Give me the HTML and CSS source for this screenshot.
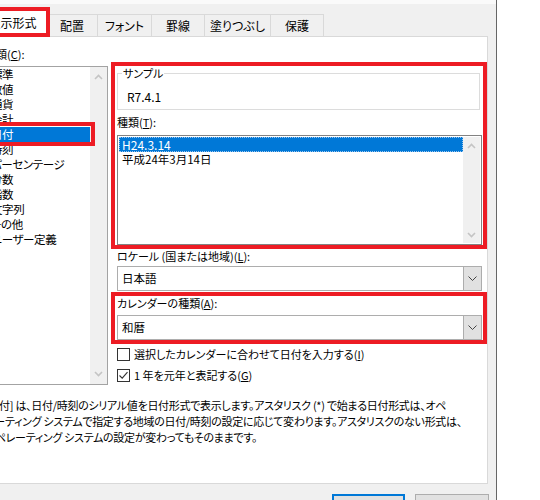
FILE: index.html
```html
<!DOCTYPE html>
<html lang="ja">
<head>
<meta charset="utf-8">
<title>セルの書式設定</title>
<link rel="stylesheet" href="styles.css">
</head>
<body>
<div class="screen">
  <div class="dialog">
    <div class="topband"></div>
    <div class="inner">
      <div class="tabs">
        <div class="tab active w-hyoji">表示形式<span class="mark mark-tab"></span></div>
        <div class="tab w-haichi">配置</div>
        <div class="tab w-font">フォント</div>
        <div class="tab w-keisen">罫線</div>
        <div class="tab w-nuri">塗りつぶし</div>
        <div class="tab w-hogo">保護</div>
      </div>
      <div class="panel">
        <div class="columns">
          <div class="leftcol">
            <div class="label lbl-cat">分類(<u>C</u>):</div>
            <div class="listbox cat">
              <div class="items">
                <div class="item">標準</div>
                <div class="item">数値</div>
                <div class="item">通貨</div>
                <div class="item">会計</div>
                <div class="item selected">日付<span class="mark mark-item"></span></div>
                <div class="item">時刻</div>
                <div class="item">パーセンテージ</div>
                <div class="item">分数</div>
                <div class="item">指数</div>
                <div class="item">文字列</div>
                <div class="item">その他</div>
                <div class="item">ユーザー定義</div>
              </div>
              <div class="vscroll cat-scroll">
                <svg class="chev" width="9" height="6" viewBox="0 0 9 6"><path d="M1 5 L4.5 1.5 L8 5" fill="none" stroke="#c4c4c4" stroke-width="1.6"/></svg>
                <svg class="chev" width="9" height="6" viewBox="0 0 9 6"><path d="M1 1 L4.5 4.5 L8 1" fill="none" stroke="#c4c4c4" stroke-width="1.6"/></svg>
              </div>
            </div>
          </div>
          <div class="rightcol">
            <div class="redbox box1">
              <div class="group">
                <span class="legend">サンプル</span>
                <div class="sample">R7.4.1</div>
              </div>
              <div class="label lbl-type">種類(<u>T</u>):</div>
              <div class="listbox types">
                <div class="items">
                  <div class="item titem selected focus">H24.3.14</div>
                  <div class="item titem">平成24年3月14日</div>
                </div>
                <div class="vscroll type-scroll">
                  <svg class="chev" width="9" height="6" viewBox="0 0 9 6"><path d="M1 5 L4.5 1.5 L8 5" fill="none" stroke="#c4c4c4" stroke-width="1.6"/></svg>
                  <svg class="chev" width="9" height="6" viewBox="0 0 9 6"><path d="M1 1 L4.5 4.5 L8 1" fill="none" stroke="#c4c4c4" stroke-width="1.6"/></svg>
                </div>
              </div>
            </div>
            <div class="label lbl-locale">ロケール (国または地域)(<u>L</u>):</div>
            <div class="combo locale">
              <span class="combo-text">日本語</span>
              <span class="combo-btn"><svg width="9" height="5" viewBox="0 0 9 5"><path d="M0.5 0.5 L4.5 4.5 L8.5 0.5" fill="none" stroke="#444" stroke-width="1"/></svg></span>
            </div>
            <div class="redbox box2">
              <div class="label lbl-cal">カレンダーの種類(<u>A</u>):</div>
              <div class="combo cal">
                <span class="combo-text">和暦</span>
                <span class="combo-btn"><svg width="9" height="5" viewBox="0 0 9 5"><path d="M0.5 0.5 L4.5 4.5 L8.5 0.5" fill="none" stroke="#444" stroke-width="1"/></svg></span>
              </div>
            </div>
            <div class="check row1">
              <span class="cbox"></span>
              <span class="ctext">選択したカレンダーに合わせて日付を入力する(<u>I</u>)</span>
            </div>
            <div class="check row2">
              <span class="cbox"><svg width="11" height="11" viewBox="0 0 11 11"><path d="M1.5 5.5 L4.2 8.2 L9.5 2.2" fill="none" stroke="#333" stroke-width="1.1"/></svg></span>
              <span class="ctext">1 年を元年と表記する(<u>G</u>)</span>
            </div>
          </div>
        </div>
        <div class="desc">
          <div class="dline">[日付] は、日付/時刻のシリアル値を日付形式で表示します。アスタリスク (*) で始まる日付形式は、オペ</div>
          <div class="dline">レーティング システムで指定する地域の日付/時刻の設定に応じて変わります。アスタリスクのない形式は、</div>
          <div class="dline">オペレーティング システムの設定が変わってもそのままです。</div>
        </div>
      </div>
      <div class="buttons">
        <div class="btn ok">OK</div>
        <div class="btn cancel">キャンセル</div>
      </div>
    </div>
  </div>
  <div class="outside"></div>
</div>
</body>
</html>
```

FILE: styles.css
```css
html, body {
  margin: 0;
  padding: 0;
}
body {
  width: 540px;
  height: 500px;
  overflow: hidden;
  background: #ffffff;
  font-family: "Noto Sans CJK JP", "Noto Sans", sans-serif;
  font-size: 11px;
  font-feature-settings: "palt";
  color: #000;
}
u { text-decoration: underline; text-underline-offset: 1px; }

.screen {
  display: flex;
  height: 500px;
}
.dialog {
  flex: none;
  width: 496px;
  height: 500px;
  border-right: 1px solid #666666;
  background: #f0f0f0;
  overflow: hidden;
}
.outside {
  flex: 1;
  background: #ffffff;
}
.topband {
  height: 4px;
  background: #fafafa;
}
.inner {
  margin-left: -22px;
}

/* tabs */
.tabs {
  display: flex;
  align-items: flex-end;
  height: 27px;
  margin-top: 6px;
}
.tab {
  box-sizing: border-box;
  height: 22px;
  margin-bottom: 1px;
  margin-left: -1px;
  border: 1px solid #d9d9d9;
  border-bottom: none;
  background: #f0f0f0;
  display: flex;
  align-items: center;
  justify-content: center;
  line-height: 15px;
  font-size: 12px;
  white-space: nowrap;
}
.tab.active {
  height: 27px;
  margin-bottom: 0;
  margin-left: 0;
  background: #ffffff;
  position: relative;
  z-index: 2;
  padding-bottom: 3px;
}
.w-hyoji { width: 69px; }
.w-haichi { width: 52px; }
.w-font { width: 55px; }
.w-keisen { width: 54px; }
.w-nuri { width: 67px; }
.w-hogo { width: 54px; }

/* red annotation marks */
.mark {
  position: absolute;
  box-sizing: border-box;
  border: 4px solid #ed1c24;
  pointer-events: none;
}
.mark-tab {
  top: -4px;
  bottom: 0;
  left: -6px;
  right: -4px;
}
.mark-item {
  top: -5px;
  bottom: -4px;
  left: -10px;
  right: -5px;
}

/* panel */
.panel {
  box-sizing: border-box;
  width: 510px;
  height: 448px;
  margin-top: -1px;
  border: 1px solid #d9d9d9;
  background: #ffffff;
  overflow: hidden;
  position: relative;
  z-index: 1;
}
.columns {
  display: flex;
  align-items: flex-start;
}
.label {
  height: 15px;
  line-height: 15px;
  white-space: nowrap;
}
.leftcol {
  padding-left: 6px;
  flex: none;
}
.lbl-cat { margin-top: 10px; }

.listbox {
  box-sizing: border-box;
  display: flex;
  background: #fff;
}
.listbox .items {
  flex: 1;
  min-width: 0;
}
.item {
  height: 15px;
  line-height: 15px;
  padding-left: 5px;
  white-space: nowrap;
}
.item.selected {
  background: #0078d7;
  color: #ffffff;
  position: relative;
}
.listbox.cat {
  margin-top: 4px;
  width: 123px;
  height: 319px;
  border: 1px solid #a3a3a3;
}
.cat .item {
  font-size: 11.5px;
  letter-spacing: -0.4px;
}
.vscroll {
  flex: none;
  width: 17px;
  background: #f0f0f0;
  display: flex;
  flex-direction: column;
  justify-content: space-between;
  align-items: center;
}
.cat-scroll { padding: 7px 0 7px; }
.chev { display: block; }

/* right column */
.rightcol {
  flex: none;
  width: 376px;
  margin-left: 3px;
  margin-top: 25px;
}
.redbox {
  box-sizing: border-box;
  border: 4px solid #ed1c24;
}
.box1 {
  padding: 0 1px 0 2px;
}
.group {
  box-sizing: border-box;
  width: 363px;
  height: 37px;
  margin-top: 7px;
  border: 1px solid #dcdcdc;
  padding-left: 9px;
}
.legend {
  display: block;
  width: max-content;
  margin-left: -5px;
  margin-top: -8px;
  padding: 0 1px;
  background: #fff;
  line-height: 15px;
  height: 15px;
}
.sample {
  margin-top: 8px;
  line-height: 15px;
  font-size: 12px;
}
.lbl-type { margin-top: 5px; }
.listbox.types {
  margin-top: 5px;
  width: 365px;
  height: 110px;
  border: 1px solid #828282;
  padding: 1px;
}
.titem {
  padding-left: 3px;
  font-size: 11.5px;
}
.titem.focus {
  box-sizing: border-box;
  border: 1px dotted #9cc6ee;
  padding-left: 2px;
  line-height: 13px;
  font-size: 12px;
}
.type-scroll { padding: 6px 0 5px; }

.lbl-locale { margin-left: 6px; }
.combo {
  box-sizing: border-box;
  display: flex;
  width: 365px;
  height: 25px;
  border: 1px solid #adadad;
  background: #fff;
}
.combo.locale {
  margin-left: 6px;
  margin-top: 2px;
}
.combo-text {
  flex: 1;
  padding-left: 4px;
  line-height: 23px;
  white-space: nowrap;
  font-size: 11.5px;
}
.combo-btn {
  flex: none;
  width: 17px;
  border-left: 1px solid #adadad;
  background: #e1e1e1;
  display: flex;
  align-items: center;
  justify-content: center;
}
.combo-btn svg { display: block; }
.box2 {
  margin-top: 1px;
  padding: 0 0 0 2px;
}
.combo.cal { margin-top: 4px; }

.check {
  margin-left: 6px;
  display: flex;
  align-items: center;
  height: 15px;
  white-space: nowrap;
}
.row1 { margin-top: 3px; }
.row2 { margin-top: 6px; }
.cbox {
  box-sizing: border-box;
  flex: none;
  width: 13px;
  height: 13px;
  border: 1px solid #333333;
  background: #fff;
  margin-right: 4px;
  display: flex;
  align-items: center;
  justify-content: center;
}
.cbox svg { display: block; }
.ctext { line-height: 15px; }

/* description */
.desc {
  margin-top: 12px;
  padding-left: 6px;
  letter-spacing: -0.3px;
}
.dline {
  height: 16px;
  line-height: 16px;
  white-space: nowrap;
}

/* buttons */
.buttons {
  display: flex;
  justify-content: flex-end;
  gap: 10px;
  margin-top: 10px;
  padding-right: 7px;
}
.btn {
  box-sizing: border-box;
  height: 23px;
  background: #e1e1e1;
  display: flex;
  align-items: center;
  justify-content: center;
}
.btn.ok {
  width: 73px;
  border: 2px solid #0078d7;
}
.btn.cancel {
  width: 74px;
  border: 1px solid #adadad;
}
```
